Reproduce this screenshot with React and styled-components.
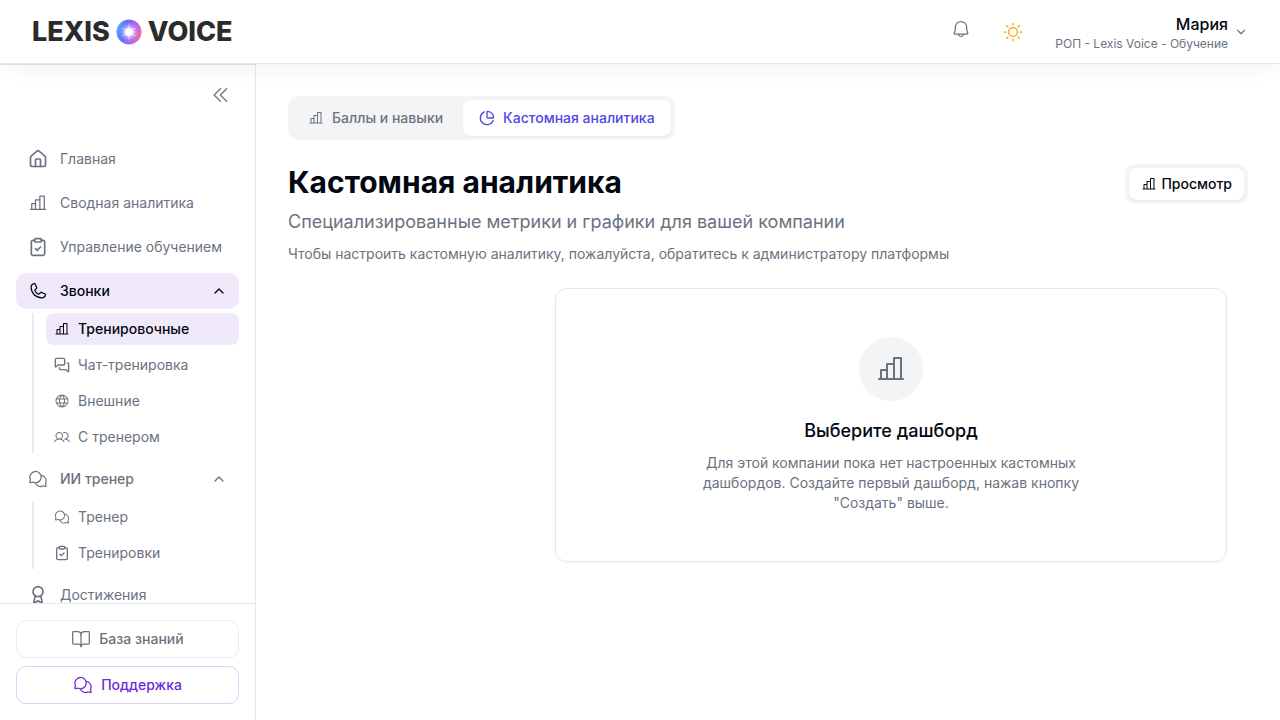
import styled, { createGlobalStyle, css } from "styled-components";
import {
  Award,
  BookOpen,
  ChartPie,
  ChevronDown,
  ChevronUp,
  ClipboardCheck,
  House,
  MessagesSquare
} from "lucide-react";
import {
  PiBell,
  PiCaretDoubleLeft,
  PiChartBar,
  PiChatsCircle,
  PiGlobe,
  PiPhone,
  PiSun,
  PiUsers
} from "react-icons/pi";

const MENU = [
  { label: "Главная", icon: House },
  { label: "Сводная аналитика", icon: PiChartBar },
  { label: "Управление обучением", icon: ClipboardCheck },
  {
    label: "Звонки",
    icon: PiPhone,
    active: true,
    children: [
      { label: "Тренировочные", icon: PiChartBar, active: true },
      { label: "Чат-тренировка", icon: MessagesSquare },
      { label: "Внешние", icon: PiGlobe },
      { label: "С тренером", icon: PiUsers }
    ]
  },
  {
    label: "ИИ тренер",
    icon: PiChatsCircle,
    children: [
      { label: "Тренер", icon: PiChatsCircle },
      { label: "Тренировки", icon: ClipboardCheck }
    ]
  },
  { label: "Достижения", icon: Award }
];

const RAYS = Array.from({ length: 12 }, (_, i) => i * 30);

function LogoMark () {
  return (
    <svg width="26" height="26" viewBox="0 0 26 26" aria-hidden="true">
      <defs>
        <linearGradient id="orb" x1="0" y1="0.35" x2="1" y2="0.65">
          <stop offset="0" stopColor="#45b4ff" />
          <stop offset="0.3" stopColor="#6a6cfc" />
          <stop offset="0.65" stopColor="#a866fa" />
          <stop offset="1" stopColor="#ff6a90" />
        </linearGradient>
        <radialGradient id="glow">
          <stop offset="0" stopColor="#fff" stopOpacity="0.6" />
          <stop offset="1" stopColor="#fff" stopOpacity="0" />
        </radialGradient>
      </defs>
      <circle cx="13" cy="13" r="12.5" fill="url(#orb)" />
      <circle cx="13" cy="13" r="10" fill="url(#glow)" />
      <circle cx="13" cy="13" r="3.5" fill="#fff" />
      {RAYS.map((angle, i) => (
        <path
          key={angle}
          d={i % 2 ? "M11.8 13 13 5.5 14.2 13Z" : "M11.8 13 13 4 14.2 13Z"}
          fill="#fff"
          transform={`rotate(${angle} 13 13)`}
        />
      ))}
    </svg>
  );
}

function MenuItem ({ item }) {
  const Icon = item.icon;

  if (!item.children) {
    return (
      <li>
        <NavLink href="#"><Icon size={20} />{item.label}</NavLink>
      </li>
    );
  }

  return (
    <li>
      <NavToggle type="button" aria-expanded="true" $active={item.active}>
        <Icon size={20} />
        <ToggleLabel>{item.label}</ToggleLabel>
        <ChevronUp size={16} />
      </NavToggle>
      <SubList>
        {item.children.map(({ label, icon: SubIcon, active }) => (
          <li key={label}>
            <SubLink href="#" $active={active}><SubIcon size={16} />{label}</SubLink>
          </li>
        ))}
      </SubList>
    </li>
  );
}

function App () {
  return (
    <>
      <GlobalStyle />
      <Page>
        <Header>
          <Logo href="#">LEXIS<LogoMark />VOICE</Logo>
          <HeaderActions>
            <BellButton type="button" aria-label="Уведомления"><PiBell size={20} /></BellButton>
            <ThemeButton type="button" aria-label="Тема"><PiSun size={20} /></ThemeButton>
            <UserButton type="button">
              <UserInfo>
                <UserName>Мария</UserName>
                <UserRole>РОП - Lexis Voice - Обучение</UserRole>
              </UserInfo>
              <ChevronDown size={14} />
            </UserButton>
          </HeaderActions>
        </Header>
        <Body>
          <Sidebar>
            <CollapseRow>
              <IconButton type="button" aria-label="Свернуть"><PiCaretDoubleLeft size={20} /></IconButton>
            </CollapseRow>
            <Nav>
              <NavList>
                {MENU.map((item) => <MenuItem key={item.label} item={item} />)}
              </NavList>
            </Nav>
            <SidebarFooter>
              <FooterButton type="button"><BookOpen size={20} strokeWidth={1.5} />База знаний</FooterButton>
              <FooterButton type="button" $accent><PiChatsCircle size={20} />Поддержка</FooterButton>
            </SidebarFooter>
          </Sidebar>
          <Main>
            <Tabs role="tablist">
              <Tab type="button" role="tab" aria-selected="false"><PiChartBar size={16} />Баллы и навыки</Tab>
              <Tab type="button" role="tab" aria-selected="true" $active><ChartPie size={16} />Кастомная аналитика</Tab>
            </Tabs>
            <Heading>
              <HeadingText>
                <Title>Кастомная аналитика</Title>
                <Subtitle>Специализированные метрики и графики для вашей компании</Subtitle>
                <Hint>Чтобы настроить кастомную аналитику, пожалуйста, обратитесь к администратору платформы</Hint>
              </HeadingText>
              <ModeSwitch>
                <ModeButton type="button"><PiChartBar size={16} />Просмотр</ModeButton>
              </ModeSwitch>
            </Heading>
            <Content>
              <EmptyCard>
                <EmptyIcon><PiChartBar size={32} /></EmptyIcon>
                <EmptyTitle>Выберите дашборд</EmptyTitle>
                <EmptyText>
                  Для этой компании пока нет настроенных кастомных дашбордов. Создайте первый дашборд, нажав кнопку "Создать" выше.
                </EmptyText>
              </EmptyCard>
            </Content>
          </Main>
        </Body>
      </Page>
    </>
  );
}

const GlobalStyle = createGlobalStyle`
  *, *::before, *::after {
    box-sizing: border-box;
  }

  body {
    margin: 0;
    background: #fff;
    color: #030712;
    font-family: Inter, "Liberation Sans", sans-serif;
    font-size: 14px;
    line-height: 20px;
  }

  h1, h2, p, ul {
    margin: 0;
    padding: 0;
  }

  ul {
    list-style: none;
  }

  a {
    color: inherit;
    text-decoration: none;
  }

  button {
    padding: 0;
    border: 0;
    background: none;
    color: inherit;
    font: inherit;
    cursor: pointer;
  }

  svg {
    flex-shrink: 0;
  }
`;

const Page = styled.div`
  display: flex;
  flex-direction: column;
  height: 100vh;
`;

const Header = styled.header`
  display: flex;
  align-items: center;
  justify-content: space-between;
  height: 64px;
  padding: 0 32px;
  flex-shrink: 0;
  z-index: 1;
  background: #fff;
  border-bottom: 1px solid #e5e7eb;
  box-shadow: 0 10px 20px -6px rgba(0, 0, 0, .06);
`;

const Logo = styled.a`
  display: flex;
  align-items: center;
  gap: 6px;
  color: #2b2b2b;
  font-size: 27px;
  font-weight: 800;
  line-height: 32px;
`;

const HeaderActions = styled.div`
  display: flex;
  align-items: center;
  gap: 32px;
`;

const IconButton = styled.button`
  display: flex;
  color: #6b7280;
`;

const BellButton = styled(IconButton)`
  padding-bottom: 6px;
`;

const ThemeButton = styled(IconButton)`
  color: #f59e0b;
`;

const UserButton = styled.button`
  display: flex;
  align-items: center;
  gap: 6px;
  color: #6b7280;
`;

const UserInfo = styled.span`
  display: flex;
  flex-direction: column;
  align-items: flex-end;
`;

const UserName = styled.span`
  color: #030712;
  font-size: 16px;
  font-weight: 500;
  line-height: 24px;
`;

const UserRole = styled.span`
  font-size: 12px;
  line-height: 16px;
`;

const Body = styled.div`
  display: flex;
  flex: 1;
  min-height: 0;
`;

const Sidebar = styled.aside`
  display: flex;
  flex-direction: column;
  width: 256px;
  flex-shrink: 0;
  border-top: 1px solid #e5e7eb;
  border-right: 1px solid #e5e7eb;
`;

const CollapseRow = styled.div`
  display: flex;
  justify-content: flex-end;
  padding: 20px 24px;
`;

const Nav = styled.nav`
  flex: 1;
  min-height: 0;
  padding: 16px 16px 0;
  overflow: hidden;
`;

const NavList = styled.ul`
  display: flex;
  flex-direction: column;
  gap: 8px;
`;

const navRow = css`
  display: flex;
  align-items: center;
  gap: 12px;
  width: 100%;
  height: 36px;
  padding: 0 12px;
  border-radius: 10px;
  color: #6b7280;
`;

const NavLink = styled.a`
  ${navRow}
`;

const NavToggle = styled.button`
  ${navRow}
  font-weight: 500;
  text-align: left;

  ${props => props.$active && css`
    background: #f0e9fa;
    color: #030712;
  `}
`;

const ToggleLabel = styled.span`
  flex: 1;
`;

const SubList = styled.ul`
  display: flex;
  flex-direction: column;
  gap: 4px;
  margin: 4px 0 0 16px;
  padding-left: 12px;
  border-left: 2px solid #ebeaf1;
`;

const SubLink = styled.a`
  display: flex;
  align-items: center;
  gap: 8px;
  height: 32px;
  padding: 0 8px;
  border-radius: 8px;
  color: #6b7280;

  ${props => props.$active && css`
    background: #f0e9fa;
    color: #030712;
    font-weight: 500;
  `}
`;

const SidebarFooter = styled.div`
  display: flex;
  flex-direction: column;
  gap: 8px;
  padding: 16px;
  border-top: 1px solid #e5e7eb;
`;

const FooterButton = styled.button`
  display: flex;
  align-items: center;
  justify-content: center;
  gap: 8px;
  height: 38px;
  border: 1px solid ${props => props.$accent ? "#dccffa" : "#ebecef"};
  border-radius: 10px;
  color: ${props => props.$accent ? "#6d28d9" : "#6b7280"};
  font-weight: 500;
`;

const Main = styled.main`
  display: flex;
  flex-direction: column;
  gap: 24px;
  flex: 1;
  min-width: 0;
  padding: 32px;
`;

const Tabs = styled.div`
  display: flex;
  align-self: flex-start;
  gap: 4px;
  padding: 4px;
  border-radius: 10px;
  background: #f3f4f6;
`;

const Tab = styled.button`
  display: flex;
  align-items: center;
  gap: 8px;
  height: 36px;
  padding: 0 16px;
  border-radius: 8px;
  color: #6b7280;
  font-weight: 500;

  ${props => props.$active && css`
    background: #fff;
    box-shadow: 0 1px 2px rgba(0, 0, 0, .06);
    color: #4f46e5;
  `}
`;

const Heading = styled.div`
  display: flex;
  align-items: flex-start;
  justify-content: space-between;
`;

const HeadingText = styled.div`
  display: flex;
  flex-direction: column;
  gap: 8px;
`;

const Title = styled.h1`
  font-size: 30px;
  font-weight: 700;
  line-height: 36px;
`;

const Subtitle = styled.p`
  color: #6b7280;
  font-size: 18px;
  line-height: 28px;
`;

const Hint = styled.p`
  color: #6b7280;
`;

const ModeSwitch = styled.div`
  padding: 4px;
  border-radius: 10px;
  background: #f3f4f6;
`;

const ModeButton = styled.button`
  display: flex;
  align-items: center;
  gap: 4px;
  height: 32px;
  padding: 0 12px;
  border-radius: 8px;
  background: #fff;
  box-shadow: 0 1px 2px rgba(0, 0, 0, .06);
  font-weight: 500;
`;

/* the first column is kept for the list of dashboards */
const Content = styled.div`
  display: grid;
  grid-template-columns: repeat(4, 1fr);
  gap: 24px;
`;

const EmptyCard = styled.section`
  display: flex;
  flex-direction: column;
  align-items: center;
  grid-column: 2 / -1;
  justify-self: center;
  width: 100%;
  max-width: 672px;
  padding: 48px;
  border: 1px solid #e5e7eb;
  border-radius: 12px;
  box-shadow: 0 1px 2px rgba(0, 0, 0, .05);
  text-align: center;
`;

const EmptyIcon = styled.div`
  display: flex;
  align-items: center;
  justify-content: center;
  width: 64px;
  height: 64px;
  border-radius: 50%;
  background: #f3f4f6;
  color: #6b7280;
`;

const EmptyTitle = styled.h2`
  margin-top: 16px;
  font-size: 18px;
  font-weight: 500;
  line-height: 28px;
`;

const EmptyText = styled.p`
  max-width: 384px;
  margin-top: 8px;
  color: #6b7280;
`;

export default App;
